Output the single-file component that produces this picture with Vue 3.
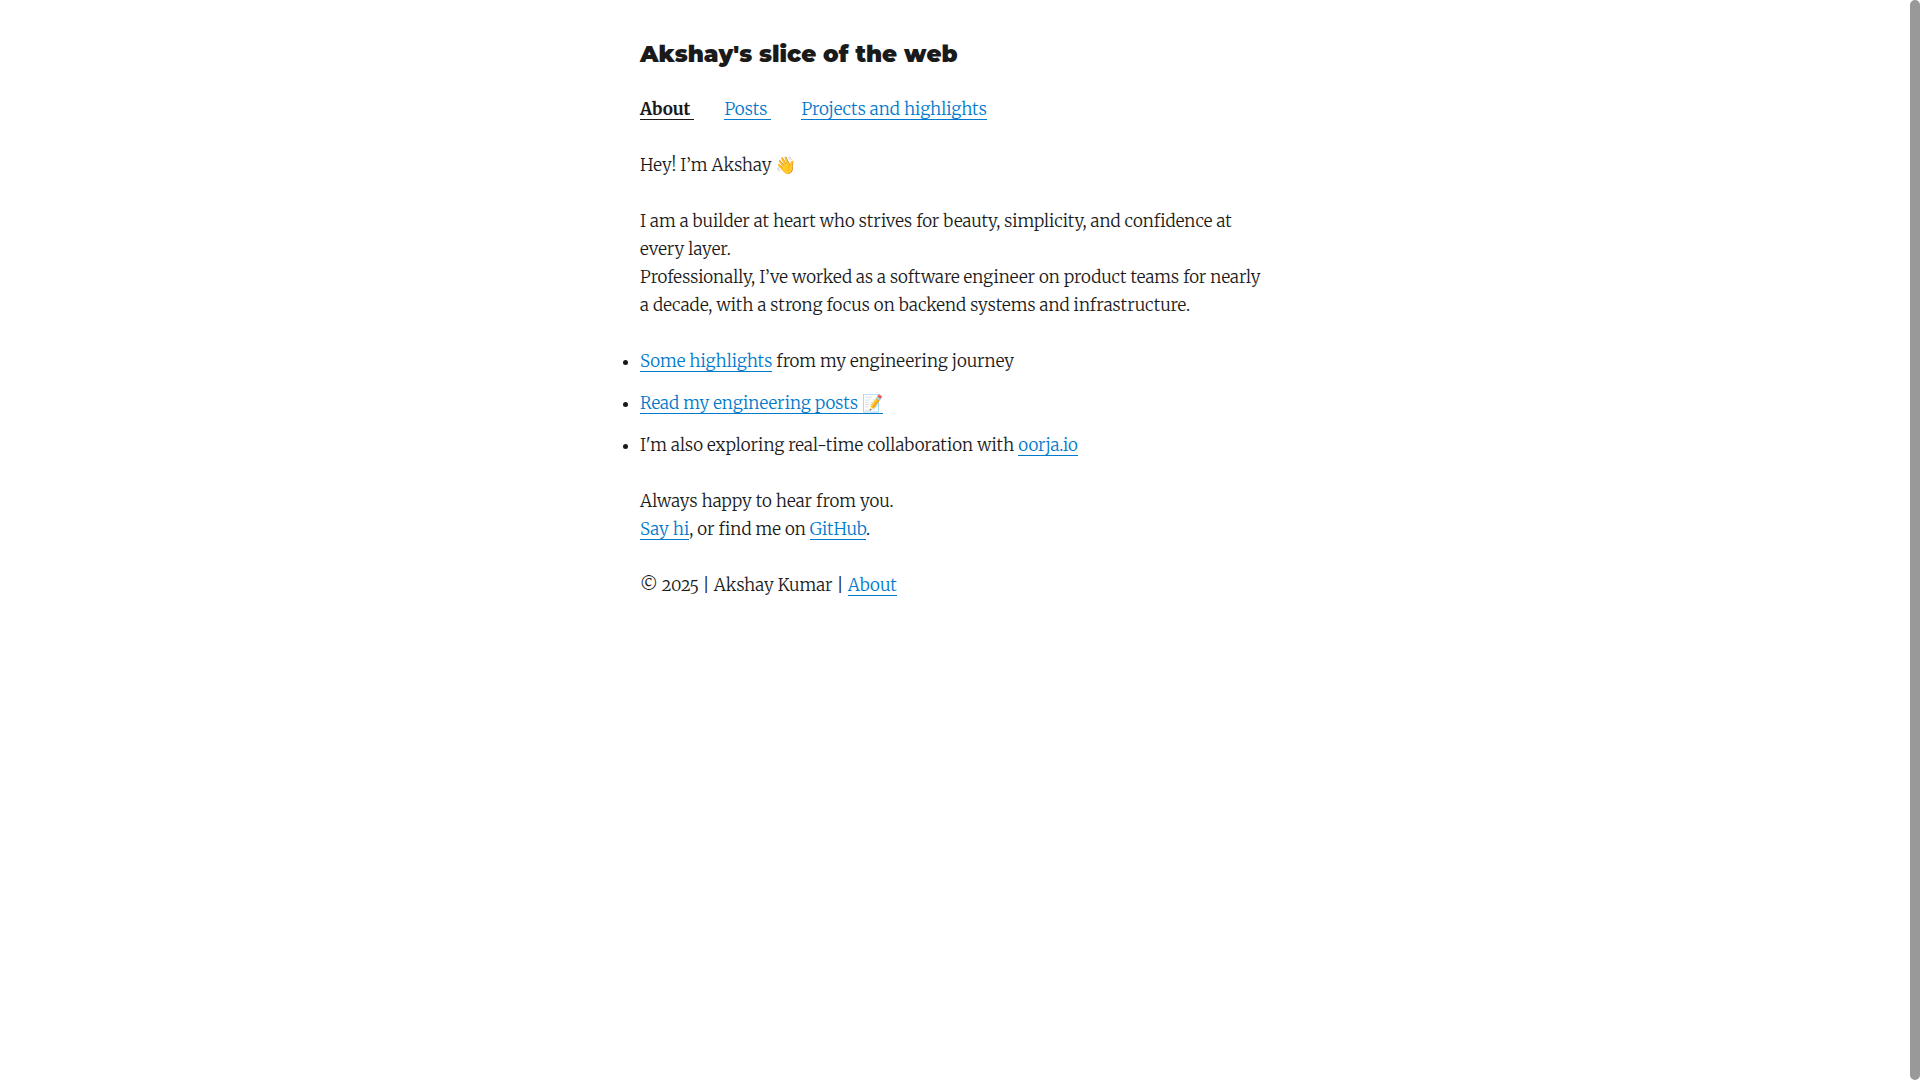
<template>
  <div class="page">
    <div class="wrapper">
      <header>
        <h1 class="title">Akshay's slice of the web</h1>
        <nav class="nav">
          <a
            v-for="link in links"
            :key="link.href"
            :href="link.href"
            :class="{ active: link.active }"
          >{{ link.label }}</a>
        </nav>
      </header>

      <main>
        <p>Hey! I’m Akshay 👋</p>
        <p>
          I am a builder at heart who strives for beauty, simplicity, and confidence at every layer.<br>
          Professionally, I’ve worked as a software engineer on product teams for nearly a decade, with a strong focus on backend systems and infrastructure.
        </p>
        <ul>
          <li><a href="#highlights">Some highlights</a> from my engineering journey</li>
          <li><a href="#posts">Read my engineering posts 📝</a></li>
          <li>I'm also exploring real-time collaboration with <a href="#oorja">oorja.io</a></li>
        </ul>
        <p>
          Always happy to hear from you.<br>
          <a href="#contact">Say hi</a>, or find me on <a href="#github">GitHub</a>.
        </p>
      </main>

      <footer>© 2025 | Akshay Kumar | <a href="#about">About</a></footer>
    </div>
    <div class="scroll-thumb" aria-hidden="true"></div>
  </div>
</template>

<script setup>
// trailing spaces are part of the underlined labels
const links = [
  { label: 'About\u00a0', href: '#about', active: true },
  { label: 'Posts\u00a0', href: '#posts' },
  { label: 'Projects and highlights', href: '#projects' },
]
</script>

<style>
body {
  margin: 0;
  background: #fff;
}
</style>

<style scoped>
.page {
  padding-right: 10px;
  color: #1a1a1a;
  font-family: 'Merriweather', 'DejaVu Serif Condensed', 'DejaVu Serif', serif;
  font-size: 17px;
  font-weight: 350;
  font-variant-numeric: oldstyle-nums;
  line-height: 28px;
}

.wrapper {
  max-width: 630px;
  margin: 0 auto;
  padding: 42px 20px;
}

.title {
  margin: 0 0 28px;
  font-family: 'Montserrat', 'Inter', sans-serif;
  font-size: 23px;
  font-weight: 900;
  font-kerning: none;
  line-height: 25px;
}

.nav {
  display: flex;
  gap: 30px;
  margin-bottom: 28px;
}

p {
  margin: 0 0 28px;
}

ul {
  margin: 0 0 28px;
  padding: 0;
  list-style: disc outside;
}

li + li {
  margin-top: 14px;
}

li::marker {
  font-size: 16px;
}

a {
  color: #007acc;
  text-decoration: none;
  box-shadow: inset 0 -1px 0 0 currentColor;
}

/* flex items would put the underline at the bottom of the whole line box */
.nav a {
  line-height: 22px;
  margin: 3px 0;
}

a.active {
  color: #1a1a1a;
  font-weight: 700;
}

.scroll-thumb {
  position: fixed;
  top: 0;
  right: 0;
  bottom: 0;
  width: 10px;
  border-radius: 5px;
  background: #999;
}
</style>
